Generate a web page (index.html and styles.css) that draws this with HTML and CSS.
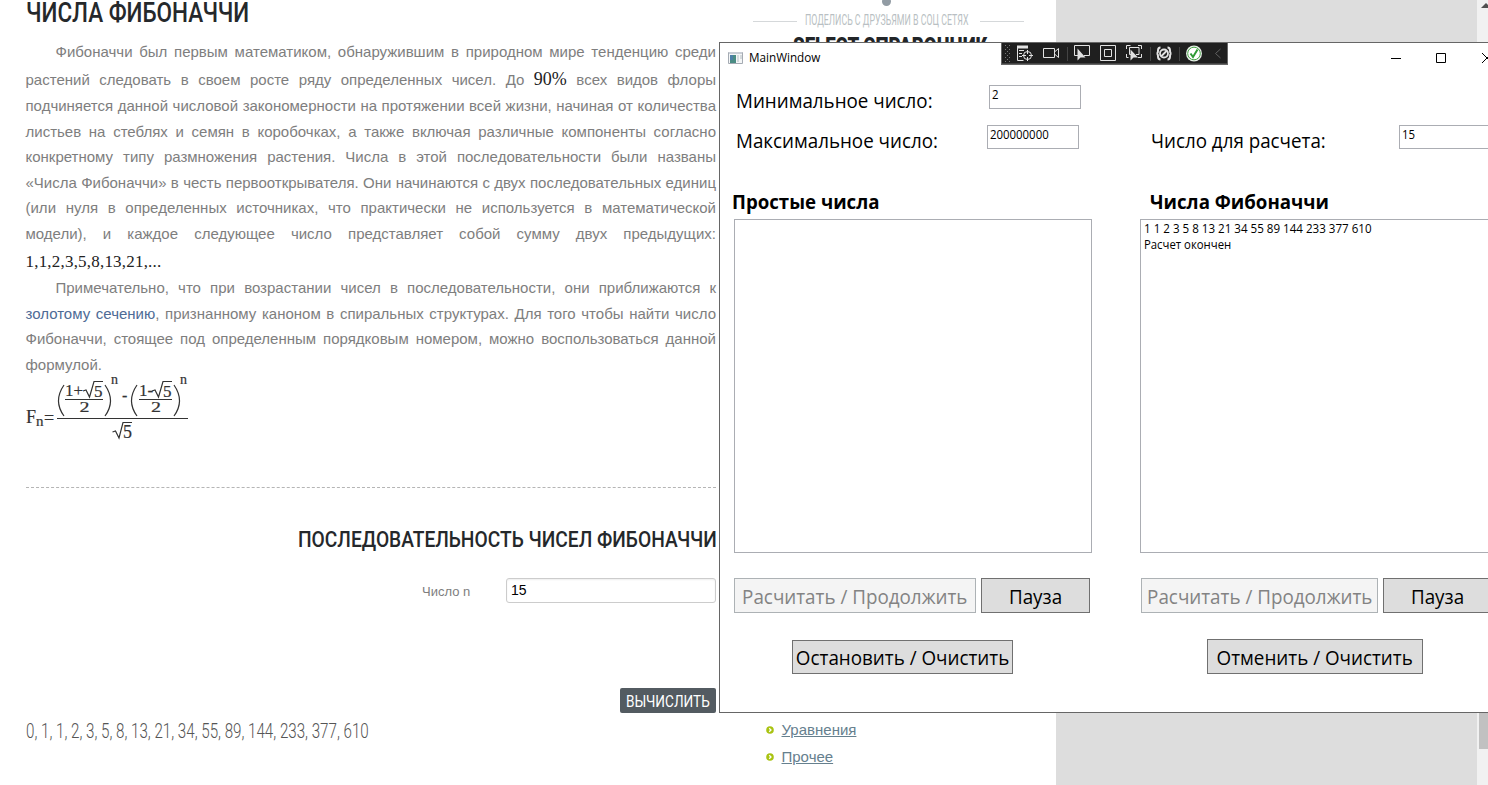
FILE: index.html
```
<!DOCTYPE html>
<html lang="ru">
<head>
<meta charset="utf-8">
<title>Числа Фибоначчи</title>
<link rel="stylesheet" href="styles.css">
</head>
<body>
<div class="page">
  <main class="article">
    <h1><span class="fit h1-t">ЧИСЛА ФИБОНАЧЧИ</span></h1>
    <div class="text">
      <span class="ln indent">Фибоначчи был первым математиком, обнаружившим в природном мире тенденцию среди</span>
      <span class="ln tall">растений следовать в своем росте ряду определенных чисел. До <b class="num">90%</b> всех видов флоры</span>
      <span class="ln">подчиняется данной числовой закономерности на протяжении всей жизни, начиная от количества</span>
      <span class="ln">листьев на стеблях и семян в коробочках, а также включая различные компоненты согласно</span>
      <span class="ln">конкретному типу размножения растения. Числа в этой последовательности были названы</span>
      <span class="ln">«Числа Фибоначчи» в честь первооткрывателя. Они начинаются с двух последовательных единиц</span>
      <span class="ln">(или нуля в определенных источниках, что практически не используется в математической</span>
      <span class="ln">модели), и каждое следующее число представляет собой сумму двух предыдущих:</span>
      <span class="ln last tall"><b class="num">1,1,2,3,5,8,13,21,...</b></span>
      <span class="ln indent">Примечательно, что при возрастании чисел в последовательности, они приближаются к</span>
      <span class="ln"><a>золотому сечению</a>, признанному каноном в спиральных структурах. Для того чтобы найти число</span>
      <span class="ln">Фибоначчи, стоящее под определенным порядковым номером, можно воспользоваться данной</span>
      <span class="ln last">формулой.</span>
    </div>
    <svg class="formula" width="170" height="68" viewBox="0 0 170 68">
      <g class="f-text">
        <text x="0" y="47" font-size="18">F</text><text x="10" y="50" font-size="15">n</text><text x="18" y="48" font-size="18">=</text>
        <text x="39" y="20" font-size="17">1+</text><text x="68" y="21" font-size="17">5</text><text x="53.500" y="36" font-size="15" textLength="10" lengthAdjust="spacingAndGlyphs">2</text><text x="85" y="8" font-size="14">n</text>
        <text x="96" y="25" font-size="16">-</text>
        <text x="113" y="20" font-size="17">1-</text><text x="137" y="21" font-size="17">5</text><text x="125" y="36" font-size="15" textLength="10" lengthAdjust="spacingAndGlyphs">2</text><text x="154" y="8" font-size="14">n</text>
        <text x="97" y="62" font-size="18">5</text>
      </g>
      <g class="f-line">
        <path d="M38 9Q27 25 38 40M79 9Q90 25 79 40M111 9Q100 25 111 40M148 9Q159 25 148 40"/>
        <path d="M39 23.500h38M113 23.500h33M31 42.500h131"/>
        <path d="M57 15l3-1 3.500 7L68 5.500h9M126 15l3-1 3.500 7L137 5.500h9M86.500 56l3-1 3.500 7 4-15.500h9"/>
      </g>
    </svg>
    <hr>
    <h2><span class="fit h2-t">ПОСЛЕДОВАТЕЛЬНОСТЬ ЧИСЕЛ ФИБОНАЧЧИ</span></h2>
    <div class="form-row"><label>Число n</label><div class="field">15</div></div>
    <div class="calc"><span class="fit calc-t">ВЫЧИСЛИТЬ</span></div>
    <div class="result"><span class="fit res-t">0, 1, 1, 2, 3, 5, 8, 13, 21, 34, 55, 89, 144, 233, 377, 610</span></div>
  </main>
  <aside class="side">
    <div class="dot"></div>
    <div class="share"><i></i><span class="fit share-t">ПОДЕЛИСЬ С ДРУЗЬЯМИ В СОЦ СЕТЯХ</span><i></i></div>
    <div class="select"><span class="fit sel-t">SELECT СПРАВОЧНИК</span></div>
    <ul>
      <li><svg width="8" height="8" viewBox="0 0 8 8"><circle cx="4" cy="4" r="3.800"/><path d="M3.200 2.200 5 4 3.200 5.800"/></svg><a>Уравнения</a></li>
      <li><svg width="8" height="8" viewBox="0 0 8 8"><circle cx="4" cy="4" r="3.800"/><path d="M3.200 2.200 5 4 3.200 5.800"/></svg><a>Прочее</a></li>
    </ul>
  </aside>
  <div class="scroll"><svg width="11" height="12" viewBox="0 0 11 12"><path d="M4 8 9 3l5 5z" fill="#505050"/></svg><div class="thumb"></div></div>
</div>

<section class="window">
  <header>
    <svg class="app" width="16" height="14" viewBox="0 0 16 14"><path d="M.500 1.500h14v11H.500z" fill="#f4f6f7" stroke="#a5abb3"/><path d="M1 1h13v2H1z" fill="#c9ced6"/><path d="M2 4h6v8H2z" fill="#4a8c84"/><path d="M2 4h3v5H2z" fill="#4d7fa8"/><path d="M9 4h2v7H9zM12 4h2v4h-2z" fill="#d5dadd"/></svg>
    <span class="fit title-t">MainWindow</span>
    <svg class="controls" width="108" height="14" viewBox="0 0 108 14" fill="none" stroke="#000"><path d="M11 7.500h10M56.500 2.500h9v9h-9zM102 2l10 10M102 12l10-10"/></svg>
  </header>
  <svg class="toolbar" width="227" height="22" viewBox="0 0 227 22" fill="none">
    <path d="M0 0h227v22H0z" fill="#666"/><path d="M1 0h225v20.500H1z" fill="#1f1f1f"/>
    <path d="M4.500 2v17M8.500 2v17" stroke="#777" stroke-dasharray="1 3"/><path d="M6.500 4v15" stroke="#777" stroke-dasharray="1 3"/>
    <g stroke="#e2e2e2">
      <path d="M16 4h11" stroke-width="3"/><path d="M16.500 3v14.500h6M18 7.500h5M18 10.500h3M18 13.500h3"/><circle cx="26.500" cy="12.500" r="4"/><path d="M26.500 7v4M26.500 14v4M21 12.500h4M28 12.500h4"/>
      <path d="M42.500 5.500h11v9h-11zM53.500 9l4-3.500v9l-4-3.500"/>
      <path d="M77 12.500h-3.500v-10h15v10H83"/>
      <path d="M99.500 2.500h15v15h-15zM103.500 6.500h7v7h-7z"/>
      <path d="M125.500 6V2.500h4M137 2.500h3.500V6M140.500 11v3.500H137M125.500 11v3.500h2M130 11.500h-1.500v-7h9.500v7h-3"/>
      <path d="M159.500 4.500q-2.500 0-2.500 3t-1.500 3q1.500 0 1.500 3t2.500 3M166.500 4.500q2.500 0 2.500 3t1.500 3q-1.500 0-1.500 3t-2.500 3" stroke-width="2"/><circle cx="163" cy="10.500" r="4" stroke-width="1.800"/><path d="m160 13.500 6-6" stroke-width="1.800"/>
    </g>
    <path d="M76.500 5.500v12l3-3h5zM129.500 6.500v11l3-3h4.500z" fill="#e2e2e2"/>
    <path d="M66.500 4v14M149.500 4v14M178.500 4v14" stroke="#444"/>
    <circle cx="193" cy="10.500" r="8" fill="#e8f0e8"/><circle cx="193" cy="10.500" r="6.300" stroke="#48a548" fill="#fff"/><path d="m189.500 10.500 2.500 3.500 4.500-7.500" stroke="#2f9a35" stroke-width="2"/>
    <path d="m219.500 6-5 4.500 5 4.500" stroke="#606060"/>
  </svg>
  <div class="panes">
    <div class="pane left">
      <div class="row r1"><span class="lbl"><span class="fit l1">Минимальное число:</span></span><div class="box"><span class="fit s0">2</span></div></div>
      <div class="row r2"><span class="lbl"><span class="fit l2">Максимальное число:</span></span><div class="box"><span class="fit s1">200000000</span></div></div>
      <h3><span class="fit b1">Простые числа</span></h3>
      <div class="list"></div>
      <div class="btns"><div class="btn off"><span class="fit t1">Расчитать / Продолжить</span></div><div class="btn pause"><span class="fit t2">Пауза</span></div></div>
      <div class="btn stop"><span class="fit t3">Остановить / Очистить</span></div>
    </div>
    <div class="pane right">
      <div class="row r1"></div>
      <div class="row r2"><span class="lbl"><span class="fit l3">Число для расчета:</span></span><div class="box"><span class="fit s0">15</span></div></div>
      <h3><span class="fit b2">Числа Фибоначчи</span></h3>
      <div class="list"><div><span class="fit s2">1 1 2 3 5 8 13 21 34 55 89 144 233 377 610</span></div><div><span class="fit s3">Расчет окончен</span></div></div>
      <div class="btns"><div class="btn off"><span class="fit t1">Расчитать / Продолжить</span></div><div class="btn pause"><span class="fit t2">Пауза</span></div></div>
      <div class="btn stop"><span class="fit t4">Отменить / Очистить</span></div>
    </div>
  </div>
</section>
</body>
</html>
```
FILE: styles.css
```
* { box-sizing: border-box; }
body { margin: 0; width: 1488px; height: 785px; overflow: hidden; background: #ddd; position: relative; }
h1, h2, h3, ul { margin: 0; padding: 0; font-weight: normal; }

/* Condensed text */
.fit { display: inline-block; white-space: nowrap; transform-origin: 0 50%; }
.h1-t { transform: scaleX(.833); }
.h2-t { transform: scaleX(.872); }
.calc-t { transform: scaleX(.8); }
.res-t { transform: scaleX(.777); }
.sel-t { transform: scaleX(.775); }
.title-t { transform: scaleX(.975); }
.l1, .l2, .l3 { transform: scaleX(.963); }
.b1, .b2 { transform: scaleX(.957); }
.s0, .s1 { transform: scaleX(.95); }
.s2 { transform: scaleX(.965); }
.s3 { transform: scaleX(.945); }
.t1, .t2, .t3, .t4 { transform: scaleX(.965); }

/* Web page */
.page { display: flex; height: 785px; }
.article { width: 720px; height: 785px; padding-left: 26px; padding-right: 4px; background: #fff; color: #7e7e7e; font-family: "Liberation Sans", Arial, sans-serif; display: flex; flex-direction: column; }
h1, h2, .calc, .result, .share, .select { font-family: Roboto, "Open Sans", sans-serif; }
h1 { height: 39px; font-size: 27px; line-height: 26px; color: #25282b; font-weight: 500; }
.text { margin-left: -.5px; font-size: 15px; line-height: 25.6px; height: 339px; }
.ln { display: block; height: 25.6px; text-align: justify; text-align-last: justify; white-space: nowrap; }
.tall { height: 28.4px; line-height: 29.6px; }
.last { text-align-last: left; }
.indent { padding-left: 30px; }
.num { font: 18px "Liberation Serif", Georgia, serif; color: #222; line-height: 1; }
.last .num { font-size: 17px; letter-spacing: .2px; }
.text a { color: #4e6b96; }
.formula { display: block; flex: none; margin-top: -2px; overflow: visible; }
.f-text { font-family: "Liberation Serif", Georgia, serif; fill: #333; stroke: #333; stroke-width: .2; }
.f-line { fill: none; stroke: #333; stroke-width: 1.2; }
hr { width: 690px; margin: 43px 0 0; border: 0; border-top: 1px dashed #b5b5b5; }
h2 { height: 40px; margin-top: 38px; padding-left: 272px; font-size: 22px; line-height: 28px; color: #25282b; font-weight: 500; }
.form-row { display: flex; justify-content: flex-end; align-items: center; height: 25px; margin-top: 12px; }
.form-row label { font-size: 13px; width: 84px; padding-top: 2px; }
.field { width: 210px; height: 25px; border: 1px solid #ccc; border-radius: 3px; box-shadow: inset 0 1px 2px #eee; padding-left: 4px; font: 14px/23px "Liberation Sans", sans-serif; color: #000; }
.calc { width: 96px; height: 25px; margin: 85px 0 0 594px; padding-left: 6px; background: #535b61; border-radius: 2px; color: #fff; font-size: 17px; line-height: 27px; }
.result { font-size: 19.5px; font-weight: 300; line-height: 26px; margin-top: 6px; color: #555; }
.side { width: 336px; background: #fff; }
.dot { width: 9px; height: 9px; border-radius: 50%; background: #929ca4; margin: -3px 0 0 162px; }
.share { display: flex; align-items: center; height: 28px; font-size: 14px; color: #b9bfc3; padding-left: 33px; }
.share i { width: 44px; height: 1px; background: #d5d8da; margin-top: 2px; flex: none; }
.share-t { margin-left: 8px; width: 175px; transform: scaleX(.63); }
.select { height: 682px; padding-left: 73px; font-size: 24px; line-height: 25px; font-weight: 900; color: #222528; }
.side li { display: flex; align-items: center; gap: 8px; height: 27px; padding-left: 45.5px; font: 15px "Liberation Sans", sans-serif; color: #66808e; }
.side a { text-decoration: underline; }
.side circle { fill: #a9c312; }
.side path { fill: none; stroke: #fff; stroke-width: 1.3; }
.scroll { width: 11px; margin-left: auto; background: #f1f1f1; display: flex; flex-direction: column; }
.scroll svg { display: block; flex: none; }
.thumb { width: 9px; height: 249px; margin: 488px 0 0 2px; background: #c1c1c1; }

/* Application window */
.window { position: absolute; left: 719px; top: 42px; width: 769px; height: 671px; overflow: hidden; background: #fff; border: 1px solid #666; border-right: 0; color: #000; font-family: "Open Sans", "Noto Sans", sans-serif; }
.window header { display: flex; align-items: center; height: 29px; padding-left: 8px; font-size: 12px; }
.title-t { margin-left: 5px; }
.controls { margin-left: auto; }
.toolbar { position: absolute; left: 281px; top: 0; }
.panes { display: flex; font-size: 19.5px; }
.pane { flex: none; }
.left { width: 420px; padding-left: 14px; }
.right { width: 420px; }
.row { display: flex; height: 40px; padding-top: 13px; }
.lbl { display: block; width: 253px; padding-left: 2px; line-height: 31px; }
.r1 .lbl { width: 255px; }
.right .lbl { width: 259px; padding-left: 11px; }
.box { width: 92px; height: 24px; border: 1px solid #abadb3; padding-left: 2px; font-size: 12px; line-height: 17px; }
h3 { height: 67px; padding-top: 37px; line-height: 26px; font-size: 19.5px; font-weight: 700; }
.left h3 { margin-left: -2px; }
.right h3 { padding-left: 10px; }
.list { width: 358px; height: 334px; border: 1px solid #abadb3; padding: 1px 2.5px; font-size: 12px; line-height: 16px; }
.btns { display: flex; gap: 5px; margin-top: 25px; }
.btn { height: 35px; display: flex; align-items: center; justify-content: center; border: 1px solid #707070; background: #ddd; padding-top: 1px; }
.btn .fit { transform-origin: 50% 50%; }
.off { width: 242px; border-color: #adb2b5; background: #f4f4f4; color: #838383; }
.pause { width: 109px; }
.stop { width: 221px; height: 34px; margin: 27px 0 0 58px; }
.right .btns { margin-left: 1px; }
.right .off { width: 237px; }
.right .stop { width: 216px; height: 35px; margin: 26px 0 0 67px; }
```
